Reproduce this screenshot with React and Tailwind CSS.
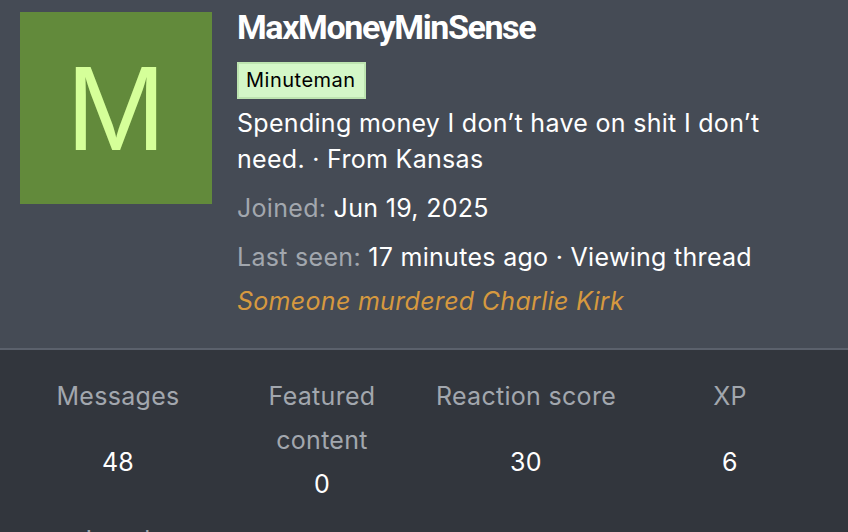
export default function App() {
  const stats = [
    { label: 'Messages', value: '48' },
    { label: 'Featured content', value: '0' },
    { label: 'Reaction score', value: '30' },
    { label: 'XP', value: '6' },
  ];

  return (
    <div className="w-[848px] h-[532px] overflow-hidden bg-[#32363d]" style={{ fontFamily: 'Inter, "Noto Sans", sans-serif' }}>
      {/* Profile header */}
      <div className="bg-[#454b55] border-b-2 border-[#5b616c] flex gap-[25px] pl-[20px] pr-[20px] pt-[12px] h-[350px]">
        <div className="w-[192px] h-[192px] shrink-0 bg-[#628a3b] flex items-center justify-center">
          <span className="text-[#d5ff99] text-[120px] leading-none" style={{ fontFamily: '"Liberation Sans", Arial, sans-serif' }}>
            M
          </span>
        </div>
        <div className="flex-1 flex flex-col text-white text-[25px] tracking-[0.3px]">
          <h1 className="text-[34px] font-bold leading-[30px] tracking-[-1.4px]" style={{ fontFamily: 'Roboto, sans-serif' }}>
            MaxMoneyMinSense
          </h1>
          <div className="mt-[18px]">
            <span className="inline-block bg-[#d4f7c8] border-2 border-[#bde4b0] text-black text-[20px] tracking-[0.5px] leading-[33px] pl-[7px] pr-[8px]">
              Minuteman
            </span>
          </div>
          <p className="leading-[36px] mt-[6px]">
            Spending money I don’t have on shit I don’t need. · From Kansas
          </p>
          <p className="leading-[36px] mt-[13px]">
            <span className="text-[#a2a7ae]">Joined:</span> Jun 19, 2025
          </p>
          <p className="leading-[36px] mt-[13px]">
            <span className="text-[#a2a7ae]">Last seen:</span> 17 minutes ago · Viewing thread
          </p>
          <p className="leading-[36px] mt-[8px] italic text-[#d6993f]">
            Someone murdered Charlie Kirk
          </p>
        </div>
      </div>

      {/* Stats */}
      <div className="grid grid-cols-4 gap-y-[12px] px-[16px] pt-[24px] text-[25px] tracking-[0.3px]">
        {stats.map((s) => (
          <div key={s.label} className="flex flex-col items-center text-center px-[8px]">
            <div className="leading-[44px] text-[#a2a7ae]">{s.label}</div>
            <div className="flex-1 flex items-center leading-[44px] text-white">{s.value}</div>
          </div>
        ))}
        <div className="flex flex-col items-center text-center px-[8px]">
          <div className="leading-[44px] text-[#a2a7ae]">Local</div>
        </div>
      </div>
    </div>
  );
}
